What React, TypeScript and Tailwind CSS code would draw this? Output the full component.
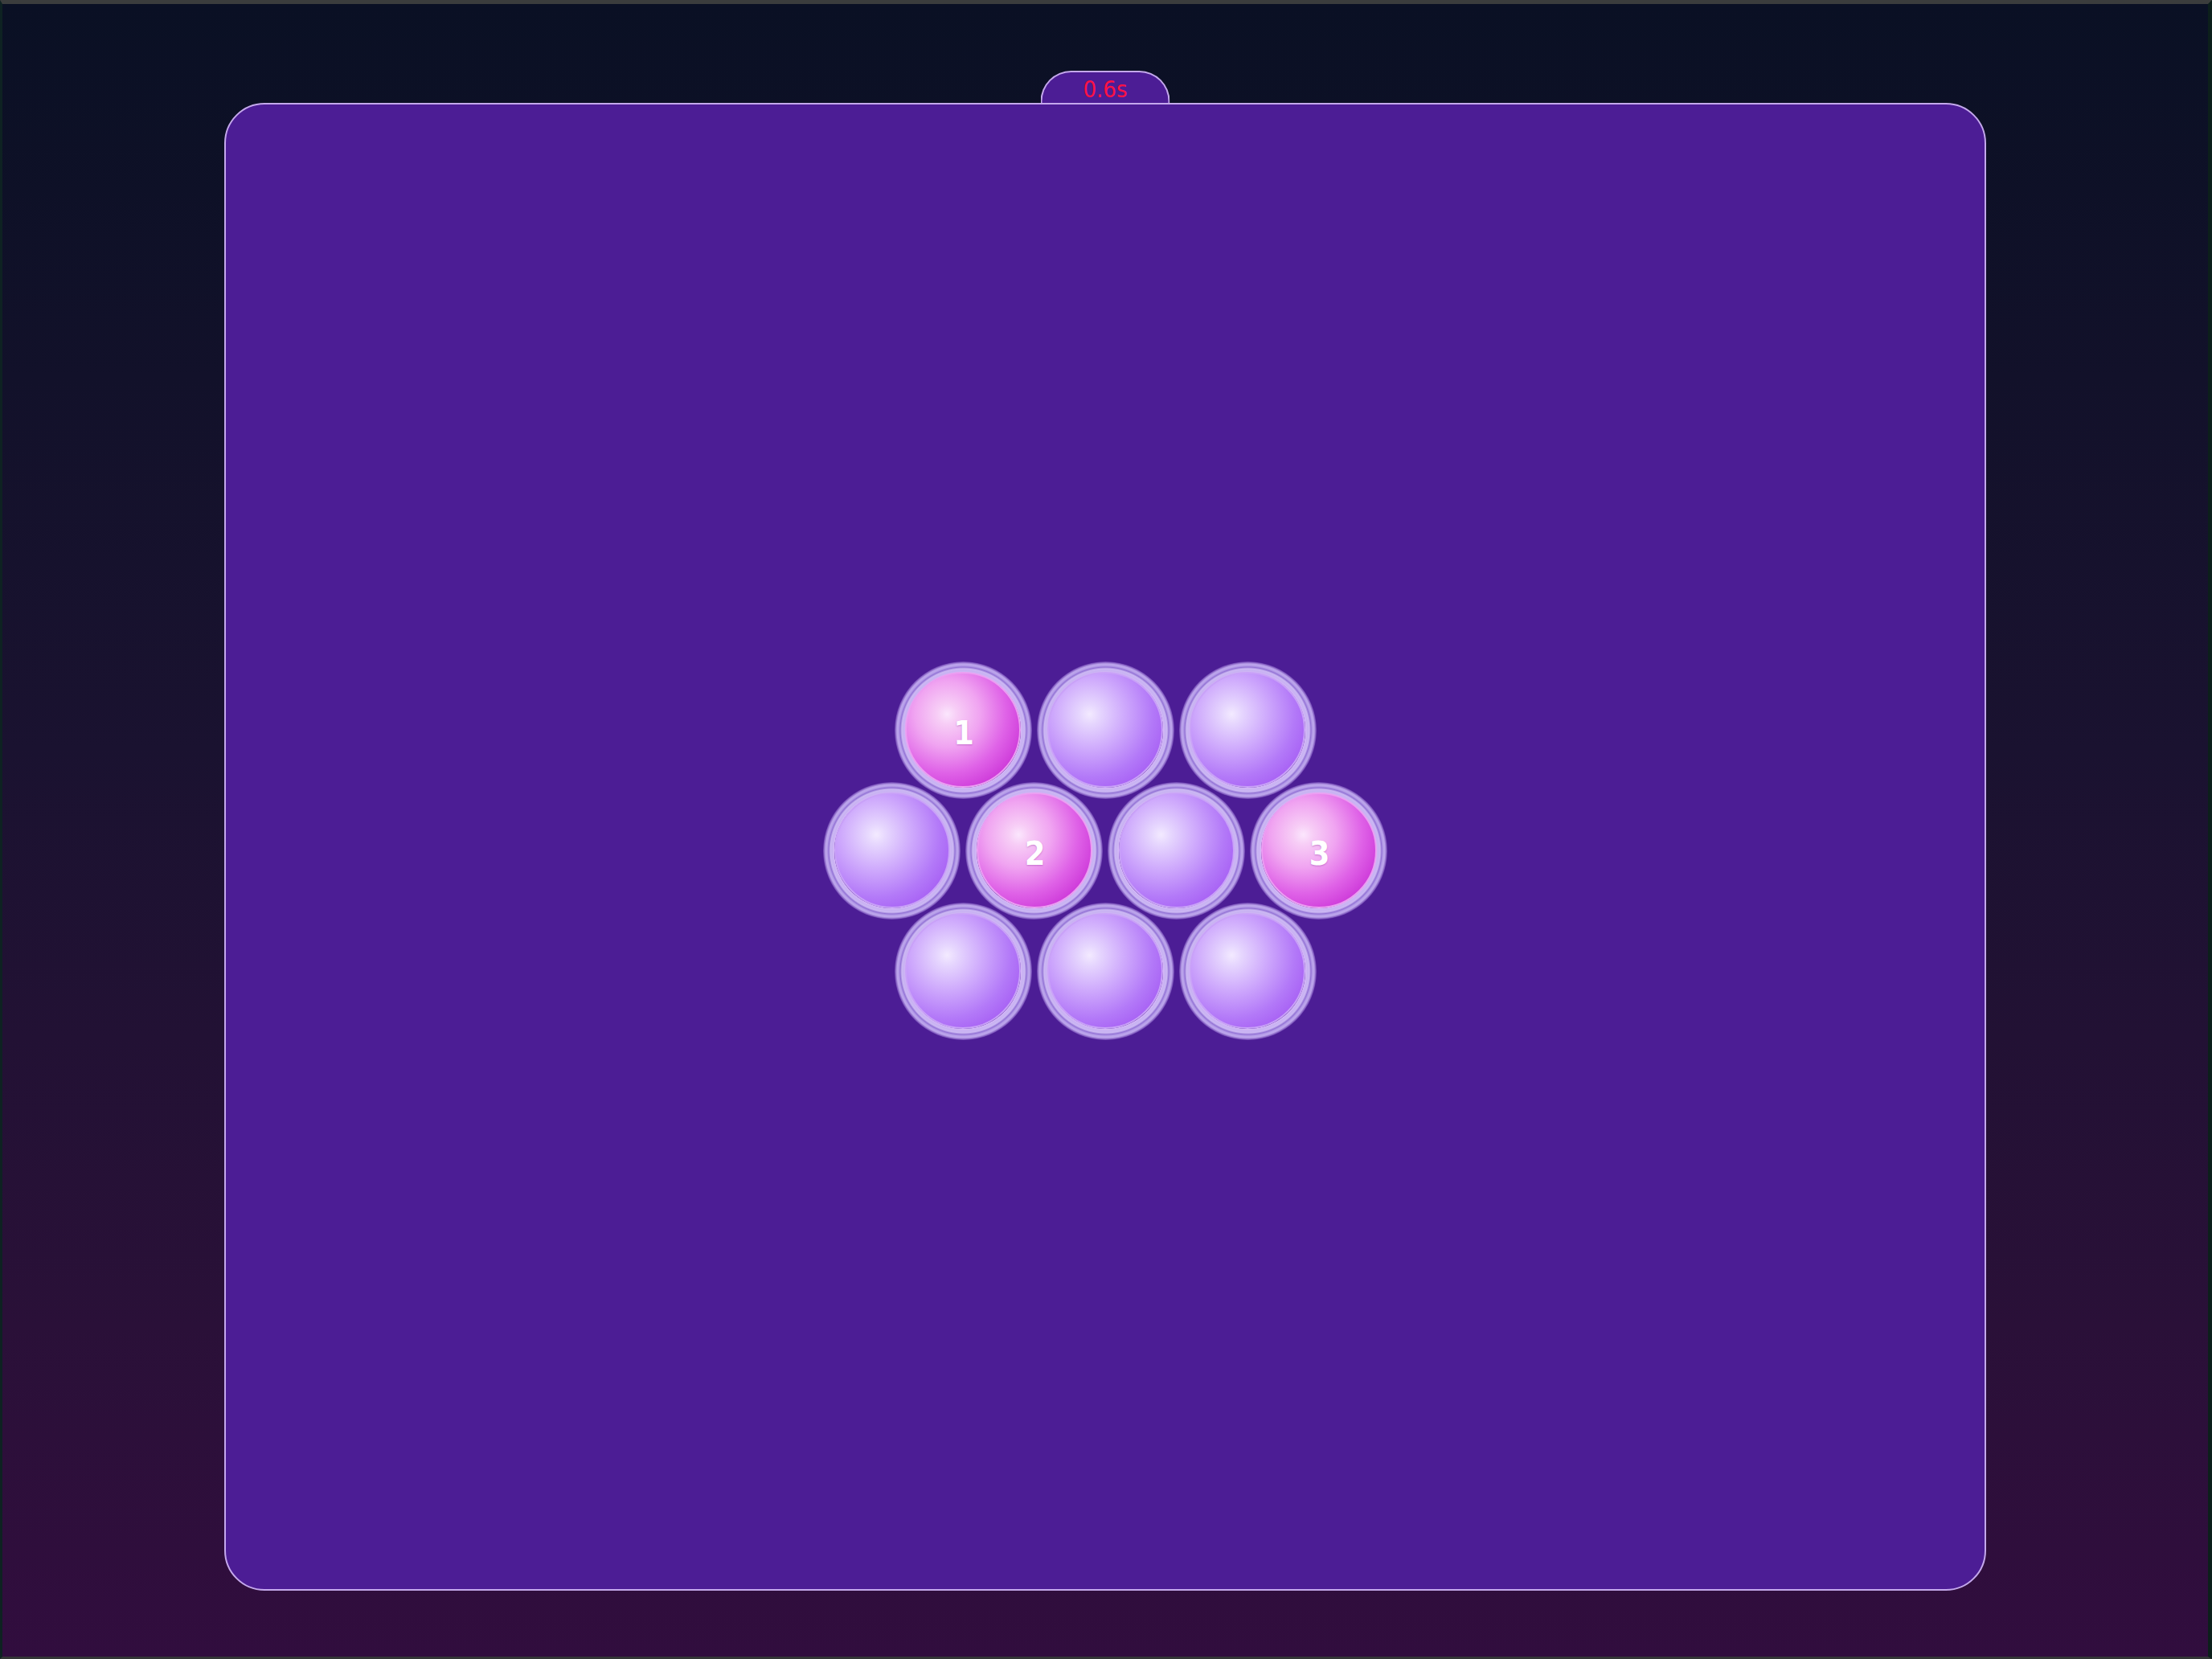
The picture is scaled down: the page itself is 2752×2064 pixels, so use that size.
import React from 'react';

type Cell = { hot?: number };

const ROWS: Cell[][] = [
  [{ hot: 1 }, {}, {}],
  [{}, { hot: 2 }, {}, { hot: 3 }],
  [{}, {}, {}],
];

function Bubble({ hot }: Cell) {
  return (
    <div className="flex h-[171px] w-[171px] shrink-0 items-center justify-center rounded-full bg-[radial-gradient(circle,transparent_71px,#d4b8f6_72px,#c8b2f2_74px,#ccb8f3_76.5px,#9474d6_78.5px,#b8a0ea_80.5px,#bca5eb_82.5px,rgba(180,150,232,0.55)_84.5px,transparent_86.5px)]">
      {hot ? (
        <div className="flex h-[144px] w-[144px] items-center justify-center rounded-full border-2 border-[#eb9ff2] bg-[radial-gradient(circle_at_36%_36%,#fbe6fd_0%,#f7cdf6_10%,#f0a4f1_32%,#df62e7_58%,#cb33d7_82%,#c026d3_100%)]">
          <span className="pl-[2px] pt-[8px] font-['DejaVu_Sans_Condensed','Liberation_Sans_Narrow','Noto_Sans',sans-serif] text-[41px] font-bold leading-none text-white [text-shadow:0_1px_2px_rgba(120,20,140,0.35)]">
            {hot}
          </span>
        </div>
      ) : (
        <div className="h-[144px] w-[144px] rounded-full border-2 border-[#c9a2f8] bg-[radial-gradient(circle_at_36%_36%,#f3eaff_0%,#e6d6fe_10%,#cda7fc_36%,#b379f8_62%,#a459f3_85%,#9d4ef0_100%)]" />
      )}
    </div>
  );
}

export default function App() {
  return (
    <div className="flex h-[2064px] w-[2752px] border-t-[5px] border-r-[5px] border-b-[3px] border-l-[3px] border-t-[#3b3d3d] border-r-[#0c1f1b] border-b-[#343636] border-l-[#0e2222] bg-[linear-gradient(180deg,#0a1024_0%,#1a1230_45%,#2a1038_80%,#310d3e_100%)] px-[276px] pt-[123px] pb-[82px] font-['Noto_Sans','Liberation_Sans',sans-serif]">
      <div className="relative flex flex-1 items-center justify-center rounded-[50px] border-2 border-[#c4a8ec] bg-[#4c1d95] pt-[9px]">
        <div className="absolute -top-[42px] left-1/2 flex h-[40px] w-[161px] -translate-x-1/2 items-center justify-center rounded-t-[38px] border-2 border-b-0 border-[#c4a8ec] bg-[#4c1d95]">
          <span className="pt-[4px] font-['DejaVu_Sans_Condensed','Liberation_Sans_Narrow','Noto_Sans',sans-serif] text-[29px] leading-none text-[#ff1144]">
            0.6s
          </span>
        </div>

        <div className="flex flex-col items-center">
          {ROWS.map((row, i) => (
            <div key={i} className={`flex gap-[6px] ${i > 0 ? '-mt-[21px]' : ''}`}>
              {row.map((c, j) => (
                <Bubble key={j} hot={c.hot} />
              ))}
            </div>
          ))}
        </div>
      </div>
    </div>
  );
}
